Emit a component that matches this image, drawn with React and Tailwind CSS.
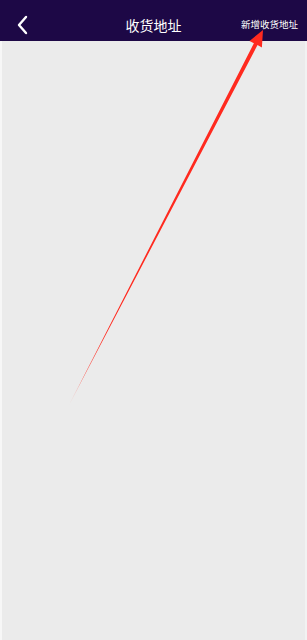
import React from "react";

export default function App() {
  return (
    <div className="relative w-[307px] h-[640px] bg-white overflow-hidden" style={{ fontFamily: '"Noto Sans CJK SC", "Noto Sans", sans-serif' }}>
      <div className="flex flex-col h-full">
        <header className="h-[41px] pt-[8px] bg-[#1d0846] flex items-center relative shrink-0">
          <div className="w-[40px] flex items-center justify-center pl-[3px]">
            <svg width="12" height="20" viewBox="0 0 12 20" fill="none">
              <path d="M10 2 L3 10 L10 18" stroke="white" strokeWidth="2.4" strokeLinecap="round" strokeLinejoin="round" />
            </svg>
          </div>
          <div className="absolute left-0 right-0 top-[8px] bottom-0 flex items-center justify-center text-white text-[14px] leading-none pointer-events-none">收货地址</div>
          <div className="ml-auto pr-[9px] text-white text-[9.5px] leading-none">新增收货地址</div>
        </header>
        <div className="flex-1 flex">
          <div className="w-[2px] bg-[#f7f7f7]" />
          <div className="flex-1 bg-[#ebebeb]" />
          <div className="w-[2px] bg-[#f2f2f2]" />
        </div>
      </div>
      <svg className="absolute inset-0 pointer-events-none" width="307" height="640" viewBox="0 0 307 640">
        <defs>
          <linearGradient id="fade" x1="68" y1="407" x2="263" y2="30" gradientUnits="userSpaceOnUse">
            <stop offset="0" stopColor="#ff2a1f" stopOpacity="0.3" />
            <stop offset="0.08" stopColor="#ff2a1f" stopOpacity="0.85" />
            <stop offset="0.2" stopColor="#ff2a1f" stopOpacity="1" />
            <stop offset="1" stopColor="#ff2a1f" stopOpacity="1" />
          </linearGradient>
        </defs>
        <polygon
          points="68,407 253.9,43.3 249.5,41 263,30 261.9,47.4 257.5,45.1"
          fill="url(#fade)"
        />
      </svg>
    </div>
  );
}
